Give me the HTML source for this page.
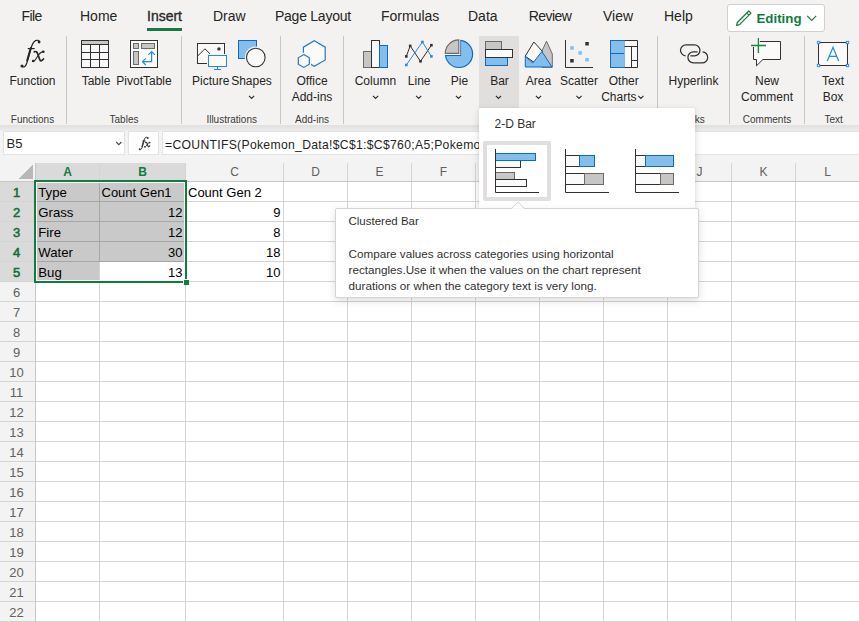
<!DOCTYPE html>
<html><head><meta charset="utf-8">
<style>
*{margin:0;padding:0;box-sizing:border-box}
html,body{width:859px;height:622px;overflow:hidden;background:#fff;font-family:"Liberation Sans",sans-serif;color:#252423}
.t{position:absolute;white-space:nowrap;line-height:1}
.c{position:absolute;white-space:nowrap;line-height:1;text-align:center;width:200px}
.a{position:absolute}
svg{position:absolute;left:0;top:0}
</style></head><body>
<!-- ribbon background -->
<div class="a" style="left:0;top:0;width:859px;height:125px;background:#f3f2f1"></div>
<div class="a" style="left:0;top:125px;width:859px;height:38px;background:#f3f3f3"></div>
<div class="a" style="left:0;top:125px;width:859px;height:6px;background:linear-gradient(#e0e0e0,#e6e6e6 50%,#ececec)"></div>
<!-- tab underline -->
<div class="a" style="left:147px;top:28px;width:35px;height:3px;background:#107c41"></div>
<!-- bar highlight -->
<div class="a" style="left:479px;top:36px;width:40px;height:72px;background:#e1dfdd"></div>
<!-- ribbon separators -->
<div class="a" style="left:66px;top:36px;width:1px;height:88px;background:#c8c6c4"></div>
<div class="a" style="left:181px;top:36px;width:1px;height:88px;background:#c8c6c4"></div>
<div class="a" style="left:280px;top:36px;width:1px;height:88px;background:#c8c6c4"></div>
<div class="a" style="left:343px;top:36px;width:1px;height:88px;background:#c8c6c4"></div>
<div class="a" style="left:657px;top:36px;width:1px;height:88px;background:#c8c6c4"></div>
<div class="a" style="left:729px;top:36px;width:1px;height:88px;background:#c8c6c4"></div>
<div class="a" style="left:804px;top:36px;width:1px;height:88px;background:#c8c6c4"></div>
<!-- editing button -->
<div class="a" style="left:727px;top:4px;width:98px;height:28px;background:#fff;border:1px solid #d2d0ce;border-radius:3px"></div>

<!-- icons -->
<svg width="859" height="622" viewBox="0 0 859 622" fill="none">
<!-- Table -->
<rect x="81.5" y="40.5" width="27" height="27" fill="#fafafa" stroke="#323130"/>
<rect x="82" y="41" width="26" height="3.5" fill="#c8c6c4"/>
<path d="M81 44.5H109M81 52.5H109M81 59.5H109M90.5 44V68M99.5 44V68" stroke="#323130"/>
<!-- PivotTable -->
<rect x="130.5" y="40.5" width="27" height="27" fill="#fafafa" stroke="#323130"/>
<rect x="133.5" y="43.5" width="5" height="5" fill="#c8c6c4" stroke="#6d6b69"/>
<rect x="141.5" y="43.5" width="13" height="5" fill="#c8c6c4" stroke="#6d6b69"/>
<rect x="133.5" y="51.5" width="5" height="13" fill="#c8c6c4" stroke="#6d6b69"/>
<path d="M151.6 52V61.7H142.6M148.4 54.8L151.6 51.6L154.8 54.8M145.8 58.4L142.5 61.7L145.8 65" stroke="#2b88d8" stroke-width="1.2"/>
<!-- Picture -->
<rect x="197.5" y="43.5" width="27" height="20" fill="#fafafa" stroke="#323130"/>
<path d="M197.5 56.2L204.9 48.8L210.2 54" stroke="#323130"/>
<circle cx="218.9" cy="48.9" r="1.7" fill="#323130"/>
<rect x="207" y="54" width="21" height="14" fill="#f3f2f1"/>
<rect x="208.5" y="55.5" width="18" height="11" fill="#fafafa" stroke="#2b88d8"/>
<path d="M217.5 66.5V69M214 69.5H221" stroke="#2b88d8"/>
<!-- Shapes -->
<rect x="238.5" y="40.5" width="18" height="18" fill="#83beec" stroke="#0f6cbd"/>
<circle cx="255.8" cy="57.5" r="11" fill="#f3f2f1"/>
<circle cx="255.8" cy="57.5" r="9.3" fill="#fafafa" stroke="#323130" stroke-width="1.1"/>
<!-- Office add-ins -->
<path d="M314.3 40.8L325.2 47.2V60L314.3 66.2L303.4 60V47.2Z" fill="#fafafa" stroke="#2278c9" stroke-width="1.2"/>
<path d="M303.8 52.5L311 56.7V65.1L303.8 69.3L296.6 65.1V56.7Z" fill="#f3f2f1"/>
<path d="M303.8 54.6L309.3 57.8V64.2L303.8 67.4L298.3 64.2V57.8Z" fill="#fafafa" stroke="#2278c9" stroke-width="1.2"/>
<!-- Column -->
<rect x="363.5" y="51.5" width="8" height="16" fill="#c8c6c4" stroke="#6d6b69"/>
<rect x="371.5" y="40.5" width="8" height="27" fill="#fafafa" stroke="#323130"/>
<rect x="379.5" y="45.5" width="8" height="22" fill="#83beec" stroke="#0f6cbd"/>
<!-- Line -->
<path d="M406.3 56.4L410.2 45.9L420.5 61.3L431.4 45.2" stroke="#323130"/>
<path d="M406.3 65L422.4 42L431.4 56.4" stroke="#2b88d8"/>
<rect x="405" y="55.1" width="2.6" height="2.6" fill="#323130"/>
<rect x="408.9" y="44.6" width="2.6" height="2.6" fill="#323130"/>
<rect x="419.2" y="60" width="2.6" height="2.6" fill="#323130"/>
<rect x="430.1" y="43.9" width="2.6" height="2.6" fill="#323130"/>
<rect x="405" y="63.7" width="2.6" height="2.6" fill="#2b88d8"/>
<rect x="421.1" y="40.7" width="2.6" height="2.6" fill="#2b88d8"/>
<rect x="430.1" y="55.1" width="2.6" height="2.6" fill="#2b88d8"/>
<!-- Pie -->
<path d="M460.5 40.4A13.6 13.6 0 1 1 445.5 55.3H460.5Z" fill="#83beec" stroke="#0f6cbd" stroke-width="1.2"/>
<path d="M458.8 53.4H445.3A13.5 13.5 0 0 1 458.8 39.9Z" fill="#c8c6c4" stroke="#f3f2f1" stroke-width="3"/>
<path d="M458.8 53.4H445.3A13.5 13.5 0 0 1 458.8 39.9Z" fill="#c8c6c4" stroke="#6d6b69" stroke-width="1.1"/>
<!-- Bar -->
<rect x="485.5" y="41.5" width="16" height="8" fill="#c8c6c4" stroke="#6d6b69"/>
<rect x="485.5" y="57.5" width="22" height="8" fill="#83beec" stroke="#0f6cbd"/>
<rect x="485.5" y="49.5" width="27" height="8" fill="#fafafa" stroke="#323130"/>
<!-- Area -->
<path d="M542 51L546.5 41.2L552.3 54V67.3H542Z" fill="#c8c6c4" stroke="#6d6b69"/>
<path d="M525.2 56.2L533.9 42L542.5 51.5L535 63Z" fill="#fafafa" stroke="#323130"/>
<path d="M525.3 56.4L532.8 63L541.9 51.5L552 67H525.3Z" fill="#83beec" stroke="#0f6cbd" stroke-linejoin="round"/>
<!-- Scatter -->
<path d="M565.5 40V67.5H593" stroke="#323130"/>
<rect x="585.3" y="42" width="3.5" height="3.5" fill="#323130"/>
<rect x="570.2" y="59" width="3.5" height="3.5" fill="#323130"/>
<rect x="570.2" y="46.2" width="3.5" height="3.5" fill="#83beec"/>
<rect x="578.4" y="51.2" width="3.5" height="3.5" fill="#83beec"/>
<rect x="585.3" y="58" width="3.5" height="3.5" fill="#83beec"/>
<!-- Other charts -->
<rect x="610.5" y="40.5" width="14" height="13" fill="#83beec" stroke="#0f6cbd"/>
<rect x="610.5" y="53.5" width="14" height="14" fill="#83beec" stroke="#0f6cbd"/>
<path d="M624.5 40.5H637.5V67.5H624.5M624.5 46.5H637.5M631.5 46.5V67.5M631.5 60.5H637.5" fill="#fafafa" stroke="#323130"/>
<!-- Hyperlink -->
<path d="M685.6 55.8A5.45 5.45 0 0 1 686.3 44.9H694.5A5.45 5.45 0 0 1 694.5 55.8H690.3M697.6 51.9H693.35A5.45 5.45 0 0 0 693.35 62.8H701.95A5.45 5.45 0 0 0 702.6 51.9" stroke="#323130" stroke-width="1.25"/>
<!-- New comment -->
<path d="M753.5 41.5H780.5V59.5H762.9L756.5 65.8V59.5H753.5Z" fill="#fafafa" stroke="#323130"/>
<rect x="749" y="36" width="10" height="8" fill="#f3f2f1"/>
<path d="M758.4 38V53M751 45.5H766" stroke="#f3f2f1" stroke-width="3"/>
<path d="M758.4 38V53M751 45.5H766" stroke="#1b8a3a" stroke-width="1.3"/>
<!-- Text box -->
<rect x="818.5" y="42.5" width="29" height="23" fill="#fafafa" stroke="#323130"/>
<path d="M827.3 61L833 47.3L838.7 61M829.3 56.3H836.7" stroke="#2b88d8" stroke-width="1.2"/>
<rect x="817.3" y="41.3" width="2.4" height="2.4" fill="#fafafa" stroke="#2b88d8" stroke-width="0.9"/>
<rect x="846.3" y="41.3" width="2.4" height="2.4" fill="#fafafa" stroke="#2b88d8" stroke-width="0.9"/>
<rect x="817.3" y="64.3" width="2.4" height="2.4" fill="#fafafa" stroke="#2b88d8" stroke-width="0.9"/>
<rect x="846.3" y="64.3" width="2.4" height="2.4" fill="#fafafa" stroke="#2b88d8" stroke-width="0.9"/>
<!-- chevrons -->
<path d="M249 95.9L251.6 98.5L254.2 95.9M373 95.9L375.6 98.5L378.2 95.9M416.1 95.9L418.7 98.5L421.3 95.9M455.9 95.9L458.5 98.5L461.1 95.9M495.9 95.9L498.5 98.5L501.1 95.9M535.9 95.9L538.5 98.5L541.1 95.9M576.4 95.9L579 98.5L581.6 95.9M638.3 95.9L640.9 98.5L643.5 95.9" stroke="#323130" stroke-width="1.15"/>
<!-- editing -->
<path d="M807.2 15.8L811.7 20.5L816.2 15.8" stroke="#107c41" stroke-width="1.1"/>
<path d="M749.3 11.5L751 13.2L739.5 24.7L736.6 25.4L737.3 22.5L748.8 11Z M746.8 13L749 15.2" stroke="#107c41" stroke-width="1.2" stroke-linejoin="round"/>
</svg>
<svg id="fxbig" width="859" height="622" viewBox="0 0 859 622" fill="none" stroke="#242424" stroke-linecap="round">
<path d="M22 66.2C23.5 67.8 25.5 67 26.8 63L30.5 50C31.5 46 32.5 42 35.5 40.6C37.5 39.8 39 40.5 39.2 41.8" stroke-width="1.2"/>
<path d="M27.2 60.5L30.8 48" stroke-width="2"/>
<path d="M27.8 48.6H34.7" stroke-width="1.2" stroke-linecap="butt"/>
<path d="M34.3 51.8C36 51 37 51.8 37.8 54L39.7 59.5C40.3 61.2 41.5 61.5 43.5 59" stroke-width="1.7"/>
<path d="M43.3 51.6C41.5 51.5 40 53 38.5 55L35.5 59.5C34.5 61 33.5 61.3 33 61" stroke-width="1.1"/>
<g fill="#242424" stroke="none"><circle cx="22" cy="66" r="1.5"/><circle cx="39.1" cy="42" r="1.4"/><circle cx="43.3" cy="51.8" r="1.3"/><circle cx="33.2" cy="61" r="1.3"/></g>
</svg>
<!-- tabs -->
<div class="t" style="left:21.5px;top:9px;font-size:14px;letter-spacing:-0.6px">File</div>
<div class="t" style="left:80px;top:9px;font-size:14px">Home</div>
<div class="t" style="left:147px;top:9px;font-size:14px;-webkit-text-stroke:0.35px #323130">Insert</div>
<div class="t" style="left:213px;top:9px;font-size:14px">Draw</div>
<div class="t" style="left:275px;top:9px;font-size:14px;letter-spacing:-0.25px">Page Layout</div>
<div class="t" style="left:381px;top:9px;font-size:14px">Formulas</div>
<div class="t" style="left:468px;top:9px;font-size:14px">Data</div>
<div class="t" style="left:528.7px;top:9px;font-size:14px;letter-spacing:-0.55px">Review</div>
<div class="t" style="left:603px;top:9px;font-size:14px">View</div>
<div class="t" style="left:664px;top:9px;font-size:14px">Help</div>
<div class="t" style="left:756.5px;top:11.5px;font-size:13.3px;font-weight:700;color:#107c41">Editing</div>

<!-- ribbon labels -->
<div class="c" style="left:-67.5px;top:75px;font-size:12px">Function</div>
<div class="c" style="left:-4px;top:75px;font-size:12px">Table</div>
<div class="c" style="left:44px;top:75px;font-size:12px">PivotTable</div>
<div class="c" style="left:110.7px;top:75px;font-size:12px">Picture</div>
<div class="c" style="left:151.5px;top:75px;font-size:12px">Shapes</div>
<div class="c" style="left:212px;top:75px;font-size:12px">Office</div>
<div class="c" style="left:212px;top:91px;font-size:12px">Add-ins</div>
<div class="c" style="left:275.4px;top:75px;font-size:12px">Column</div>
<div class="c" style="left:319.2px;top:75px;font-size:12px">Line</div>
<div class="c" style="left:359.5px;top:75px;font-size:12px">Pie</div>
<div class="c" style="left:399.5px;top:75px;font-size:12px">Bar</div>
<div class="c" style="left:438.5px;top:75px;font-size:12px">Area</div>
<div class="c" style="left:479px;top:75px;font-size:12px">Scatter</div>
<div class="c" style="left:523.8px;top:75px;font-size:12px">Other</div>
<div class="c" style="left:518.8px;top:91px;font-size:12px">Charts</div>
<div class="c" style="left:593.5px;top:75px;font-size:12px">Hyperlink</div>
<div class="c" style="left:667px;top:75px;font-size:12px">New</div>
<div class="c" style="left:667px;top:91px;font-size:12px">Comment</div>
<div class="c" style="left:733px;top:75px;font-size:12px">Text</div>
<div class="c" style="left:733px;top:91px;font-size:12px">Box</div>
<!-- group labels -->
<div class="c" style="left:-67.5px;top:114.5px;font-size:10px;color:#3b3a39">Functions</div>
<div class="c" style="left:24px;top:114.5px;font-size:10px;color:#3b3a39">Tables</div>
<div class="c" style="left:131.7px;top:114.5px;font-size:10px;color:#3b3a39">Illustrations</div>
<div class="c" style="left:212px;top:114.5px;font-size:10px;color:#3b3a39">Add-ins</div>
<div class="c" style="left:593px;top:114.5px;font-size:10px;color:#3b3a39">Links</div>
<div class="c" style="left:667px;top:114.5px;font-size:10px;color:#3b3a39">Comments</div>
<div class="c" style="left:733.7px;top:114.5px;font-size:10px;color:#3b3a39">Text</div>

<!-- formula bar -->
<div class="a" style="left:3px;top:131px;width:122px;height:24px;background:#fff;border:1px solid #e3e3e3"></div>
<div class="a" style="left:128px;top:131px;width:31px;height:24px;background:#fff;border:1px solid #e3e3e3"></div>
<div class="a" style="left:162px;top:131px;width:700px;height:24px;background:#fff;border:1px solid #e3e3e3"></div>
<div class="t" style="left:6.5px;top:137px;font-size:13px;color:#252423">B5</div>
<div class="t" style="left:165px;top:138.5px;font-size:12.2px;letter-spacing:0.3px;color:#252423">=COUNTIFS(Pokemon_Data!$C$1:$C$760;A5;Pokemon_Data!$B$1:$B$760;"2")</div>

<svg width="859" height="622" viewBox="0 0 859 622" fill="none" stroke="#3b3a39" stroke-linecap="round"><g transform="translate(139.2,137) scale(0.47) translate(-21,-40)">
<path d="M22 66.2C23.5 67.8 25.5 67 26.8 63L30.5 50C31.5 46 32.5 42 35.5 40.6C37.5 39.8 39 40.5 39.2 41.8" stroke-width="2"/>
<path d="M27.2 60.5L30.8 48" stroke-width="3"/>
<path d="M27.8 48.6H34.7" stroke-width="2" stroke-linecap="butt"/>
<path d="M34.3 51.8C36 51 37 51.8 37.8 54L39.7 59.5C40.3 61.2 41.5 61.5 43.5 59" stroke-width="2.6"/>
<path d="M43.3 51.6C41.5 51.5 40 53 38.5 55L35.5 59.5C34.5 61 33.5 61.3 33 61" stroke-width="2"/>
<g fill="#3b3a39" stroke="none"><circle cx="22" cy="66" r="2"/><circle cx="39.1" cy="42" r="2"/><circle cx="43.3" cy="51.8" r="1.8"/><circle cx="33.2" cy="61" r="1.8"/></g>
</g></svg>
<svg width="859" height="622" viewBox="0 0 859 622" fill="none"><path d="M116.2 142L118.8 144.6L121.4 142" stroke="#484644" stroke-width="1.1"/></svg>
<!-- grid svg -->
<svg width="859" height="622" viewBox="0 0 859 622" shape-rendering="crispEdges">
<rect x="0" y="163" width="859" height="19" fill="#f3f3f3"/>
<rect x="36" y="163" width="150" height="18" fill="#dadada"/>
<rect x="0" y="182" width="35" height="440" fill="#f3f3f3"/>
<rect x="0" y="182" width="35" height="100" fill="#dadada"/>
<rect x="99" y="182" width="1" height="440" fill="#d4d4d4"/>
<rect x="99" y="163" width="1" height="18" fill="#d4d4d4"/>
<rect x="185" y="182" width="1" height="440" fill="#d4d4d4"/>
<rect x="185" y="163" width="1" height="18" fill="#d4d4d4"/>
<rect x="283" y="182" width="1" height="440" fill="#d4d4d4"/>
<rect x="283" y="163" width="1" height="18" fill="#d4d4d4"/>
<rect x="347" y="182" width="1" height="440" fill="#d4d4d4"/>
<rect x="347" y="163" width="1" height="18" fill="#d4d4d4"/>
<rect x="411" y="182" width="1" height="440" fill="#d4d4d4"/>
<rect x="411" y="163" width="1" height="18" fill="#d4d4d4"/>
<rect x="475" y="182" width="1" height="440" fill="#d4d4d4"/>
<rect x="475" y="163" width="1" height="18" fill="#d4d4d4"/>
<rect x="539" y="182" width="1" height="440" fill="#d4d4d4"/>
<rect x="539" y="163" width="1" height="18" fill="#d4d4d4"/>
<rect x="603" y="182" width="1" height="440" fill="#d4d4d4"/>
<rect x="603" y="163" width="1" height="18" fill="#d4d4d4"/>
<rect x="667" y="182" width="1" height="440" fill="#d4d4d4"/>
<rect x="667" y="163" width="1" height="18" fill="#d4d4d4"/>
<rect x="731" y="182" width="1" height="440" fill="#d4d4d4"/>
<rect x="731" y="163" width="1" height="18" fill="#d4d4d4"/>
<rect x="795" y="182" width="1" height="440" fill="#d4d4d4"/>
<rect x="795" y="163" width="1" height="18" fill="#d4d4d4"/>
<rect x="36" y="201" width="823" height="1" fill="#d4d4d4"/>
<rect x="0" y="201" width="35" height="1" fill="#d4d4d4"/>
<rect x="36" y="221" width="823" height="1" fill="#d4d4d4"/>
<rect x="0" y="221" width="35" height="1" fill="#d4d4d4"/>
<rect x="36" y="241" width="823" height="1" fill="#d4d4d4"/>
<rect x="0" y="241" width="35" height="1" fill="#d4d4d4"/>
<rect x="36" y="261" width="823" height="1" fill="#d4d4d4"/>
<rect x="0" y="261" width="35" height="1" fill="#d4d4d4"/>
<rect x="36" y="281" width="823" height="1" fill="#d4d4d4"/>
<rect x="0" y="281" width="35" height="1" fill="#d4d4d4"/>
<rect x="36" y="301" width="823" height="1" fill="#d4d4d4"/>
<rect x="0" y="301" width="35" height="1" fill="#d4d4d4"/>
<rect x="36" y="321" width="823" height="1" fill="#d4d4d4"/>
<rect x="0" y="321" width="35" height="1" fill="#d4d4d4"/>
<rect x="36" y="341" width="823" height="1" fill="#d4d4d4"/>
<rect x="0" y="341" width="35" height="1" fill="#d4d4d4"/>
<rect x="36" y="361" width="823" height="1" fill="#d4d4d4"/>
<rect x="0" y="361" width="35" height="1" fill="#d4d4d4"/>
<rect x="36" y="381" width="823" height="1" fill="#d4d4d4"/>
<rect x="0" y="381" width="35" height="1" fill="#d4d4d4"/>
<rect x="36" y="401" width="823" height="1" fill="#d4d4d4"/>
<rect x="0" y="401" width="35" height="1" fill="#d4d4d4"/>
<rect x="36" y="421" width="823" height="1" fill="#d4d4d4"/>
<rect x="0" y="421" width="35" height="1" fill="#d4d4d4"/>
<rect x="36" y="441" width="823" height="1" fill="#d4d4d4"/>
<rect x="0" y="441" width="35" height="1" fill="#d4d4d4"/>
<rect x="36" y="461" width="823" height="1" fill="#d4d4d4"/>
<rect x="0" y="461" width="35" height="1" fill="#d4d4d4"/>
<rect x="36" y="481" width="823" height="1" fill="#d4d4d4"/>
<rect x="0" y="481" width="35" height="1" fill="#d4d4d4"/>
<rect x="36" y="501" width="823" height="1" fill="#d4d4d4"/>
<rect x="0" y="501" width="35" height="1" fill="#d4d4d4"/>
<rect x="36" y="521" width="823" height="1" fill="#d4d4d4"/>
<rect x="0" y="521" width="35" height="1" fill="#d4d4d4"/>
<rect x="36" y="541" width="823" height="1" fill="#d4d4d4"/>
<rect x="0" y="541" width="35" height="1" fill="#d4d4d4"/>
<rect x="36" y="561" width="823" height="1" fill="#d4d4d4"/>
<rect x="0" y="561" width="35" height="1" fill="#d4d4d4"/>
<rect x="36" y="581" width="823" height="1" fill="#d4d4d4"/>
<rect x="0" y="581" width="35" height="1" fill="#d4d4d4"/>
<rect x="36" y="601" width="823" height="1" fill="#d4d4d4"/>
<rect x="0" y="601" width="35" height="1" fill="#d4d4d4"/>
<rect x="36" y="621" width="823" height="1" fill="#d4d4d4"/>
<rect x="0" y="621" width="35" height="1" fill="#d4d4d4"/>
<rect x="0" y="181" width="859" height="1" fill="#c8c8c8"/>
<rect x="35" y="163" width="1" height="459" fill="#c8c8c8"/>
<rect x="36" y="182" width="150" height="80" fill="rgba(0,0,0,0.21)"/>
<rect x="36" y="262" width="63" height="20" fill="rgba(0,0,0,0.21)"/>
<polygon points="33,164 33,179 18,179" fill="#b8b8b8"/>
<rect x="36" y="182" width="149" height="1" fill="#fff"/>
<rect x="36" y="182" width="1" height="99" fill="#fff"/>
<rect x="184" y="182" width="1" height="99" fill="#fff"/>
<rect x="36" y="280" width="149" height="1" fill="#fff"/>
<rect x="34" y="180" width="153" height="2" fill="#107c41"/>
<rect x="34" y="180" width="2" height="103" fill="#107c41"/>
<rect x="185" y="180" width="2" height="99" fill="#107c41"/>
<rect x="34" y="281" width="149" height="2" fill="#107c41"/>
<rect x="183" y="279" width="6" height="6" fill="#fff"/>
<rect x="184" y="280" width="5" height="5" fill="#107c41"/>
</svg>
<!-- sheet text -->
<div class="c" style="left:-32.5px;top:166px;font-size:12px;color:#107c41;font-weight:700">A</div>
<div class="c" style="left:42.5px;top:166px;font-size:12px;color:#107c41;font-weight:700">B</div>
<div class="c" style="left:134.5px;top:166px;font-size:12px;color:#616161">C</div>
<div class="c" style="left:215.5px;top:166px;font-size:12px;color:#616161">D</div>
<div class="c" style="left:279.5px;top:166px;font-size:12px;color:#616161">E</div>
<div class="c" style="left:343.5px;top:166px;font-size:12px;color:#616161">F</div>
<div class="c" style="left:407.5px;top:166px;font-size:12px;color:#616161">G</div>
<div class="c" style="left:471.5px;top:166px;font-size:12px;color:#616161">H</div>
<div class="c" style="left:535.5px;top:166px;font-size:12px;color:#616161">I</div>
<div class="c" style="left:599.5px;top:166px;font-size:12px;color:#616161">J</div>
<div class="c" style="left:663.5px;top:166px;font-size:12px;color:#616161">K</div>
<div class="c" style="left:727.5px;top:166px;font-size:12px;color:#616161">L</div>
<div class="c" style="left:-83.5px;top:185.8px;font-size:13px;color:#0f7038;-webkit-text-stroke:0.55px #0f7038">1</div>
<div class="c" style="left:-83.5px;top:205.8px;font-size:13px;color:#0f7038;-webkit-text-stroke:0.55px #0f7038">2</div>
<div class="c" style="left:-83.5px;top:225.8px;font-size:13px;color:#0f7038;-webkit-text-stroke:0.55px #0f7038">3</div>
<div class="c" style="left:-83.5px;top:245.8px;font-size:13px;color:#0f7038;-webkit-text-stroke:0.55px #0f7038">4</div>
<div class="c" style="left:-83.5px;top:265.8px;font-size:13px;color:#0f7038;-webkit-text-stroke:0.55px #0f7038">5</div>
<div class="c" style="left:-83.5px;top:285.8px;font-size:13px;color:#616161">6</div>
<div class="c" style="left:-83.5px;top:305.8px;font-size:13px;color:#616161">7</div>
<div class="c" style="left:-83.5px;top:325.8px;font-size:13px;color:#616161">8</div>
<div class="c" style="left:-83.5px;top:345.8px;font-size:13px;color:#616161">9</div>
<div class="c" style="left:-83.5px;top:365.8px;font-size:13px;color:#616161">10</div>
<div class="c" style="left:-83.5px;top:385.8px;font-size:13px;color:#616161">11</div>
<div class="c" style="left:-83.5px;top:405.8px;font-size:13px;color:#616161">12</div>
<div class="c" style="left:-83.5px;top:425.8px;font-size:13px;color:#616161">13</div>
<div class="c" style="left:-83.5px;top:445.8px;font-size:13px;color:#616161">14</div>
<div class="c" style="left:-83.5px;top:465.8px;font-size:13px;color:#616161">15</div>
<div class="c" style="left:-83.5px;top:485.8px;font-size:13px;color:#616161">16</div>
<div class="c" style="left:-83.5px;top:505.8px;font-size:13px;color:#616161">17</div>
<div class="c" style="left:-83.5px;top:525.8px;font-size:13px;color:#616161">18</div>
<div class="c" style="left:-83.5px;top:545.8px;font-size:13px;color:#616161">19</div>
<div class="c" style="left:-83.5px;top:565.8px;font-size:13px;color:#616161">20</div>
<div class="c" style="left:-83.5px;top:585.8px;font-size:13px;color:#616161">21</div>
<div class="c" style="left:-83.5px;top:605.8px;font-size:13px;color:#616161">22</div>
<div class="t" style="left:38.3px;top:186.1px;font-size:13.2px;color:#000">Type</div>
<div class="t" style="left:101.5px;top:186.4px;font-size:13px;color:#000">Count Gen1</div>
<div class="t" style="left:188px;top:186.4px;font-size:13px;color:#000">Count Gen 2</div>
<div class="t" style="left:38.3px;top:206.1px;font-size:13.2px;color:#000">Grass</div>
<div class="t" style="right:676.5px;top:206.4px;font-size:13px;color:#000">12</div>
<div class="t" style="right:578.5px;top:206.4px;font-size:13px;color:#000">9</div>
<div class="t" style="left:38.3px;top:226.1px;font-size:13.2px;color:#000">Fire</div>
<div class="t" style="right:676.5px;top:226.4px;font-size:13px;color:#000">12</div>
<div class="t" style="right:578.5px;top:226.4px;font-size:13px;color:#000">8</div>
<div class="t" style="left:38.3px;top:246.1px;font-size:13.2px;color:#000">Water</div>
<div class="t" style="right:676.5px;top:246.4px;font-size:13px;color:#000">30</div>
<div class="t" style="right:578.5px;top:246.4px;font-size:13px;color:#000">18</div>
<div class="t" style="left:38.3px;top:266.1px;font-size:13.2px;color:#000">Bug</div>
<div class="t" style="right:676.5px;top:266.4px;font-size:13px;color:#000">13</div>
<div class="t" style="right:578.5px;top:266.4px;font-size:13px;color:#000">10</div>
<!-- dropdown -->
<div class="a" style="left:479px;top:108px;width:216px;height:101px;background:#fff;border-radius:2px;box-shadow:0 3px 8px rgba(0,0,0,0.14),0 0 2px rgba(0,0,0,0.08)"></div>
<div class="t" style="left:494.5px;top:118px;font-size:12px;color:#323130">2-D Bar</div>
<div class="a" style="left:483px;top:141px;width:68px;height:60px;border:4px solid #e1dfdd;border-radius:2px;background:#fff"></div>
<svg width="859" height="622" viewBox="0 0 859 622" fill="none">
<rect x="495.5" y="160.5" width="25" height="7" fill="#fafafa" stroke="#323130"/>
<rect x="495.5" y="153.5" width="40" height="7" fill="#83beec" stroke="#0f6cbd"/>
<rect x="495.5" y="172.5" width="19" height="7" fill="#c8c6c4" stroke="#6d6b69"/>
<rect x="495.5" y="179.5" width="31" height="7" fill="#fafafa" stroke="#323130"/>
<path d="M495.5 149V192.5H539" stroke="#323130"/>
<rect x="565.5" y="155.5" width="14" height="11" fill="#fafafa" stroke="#323130"/>
<rect x="579.5" y="155.5" width="15" height="11" fill="#83beec" stroke="#0f6cbd"/>
<rect x="565.5" y="173.5" width="19" height="11" fill="#fafafa" stroke="#323130"/>
<rect x="584.5" y="173.5" width="19" height="11" fill="#c8c6c4" stroke="#6d6b69"/>
<path d="M565.5 149V192.5H609" stroke="#323130"/>
<rect x="635.5" y="155.5" width="10" height="11" fill="#fafafa" stroke="#323130"/>
<rect x="645.5" y="155.5" width="28" height="11" fill="#83beec" stroke="#0f6cbd"/>
<rect x="635.5" y="173.5" width="25" height="11" fill="#fafafa" stroke="#323130"/>
<rect x="660.5" y="173.5" width="13" height="11" fill="#c8c6c4" stroke="#6d6b69"/>
<path d="M635.5 149V192.5H679" stroke="#323130"/>
</svg>
<!-- tooltip -->
<div class="a" style="left:335px;top:208px;width:364px;height:90px;background:#fff;border:1px solid #d6d4d2;border-radius:2px;box-shadow:0 3px 9px rgba(0,0,0,0.13)"></div>
<svg width="859" height="622" viewBox="0 0 859 622" fill="none">
<path d="M511.5 208.5L518 202.2L524.5 208.5" fill="#fff" stroke="#d6d4d2"/>
<rect x="512" y="208.5" width="12" height="1.5" fill="#fff"/>
</svg>
<div class="t" style="left:348.5px;top:216px;font-size:11.5px;color:#323130">Clustered Bar</div>
<div class="t" style="left:348.5px;top:245.9px;font-size:11.7px;line-height:16px;color:#323130">Compare values across categories using horizontal<br>rectangles.Use it when the values on the chart represent<br>durations or when the category text is very long.</div>
</body></html>
